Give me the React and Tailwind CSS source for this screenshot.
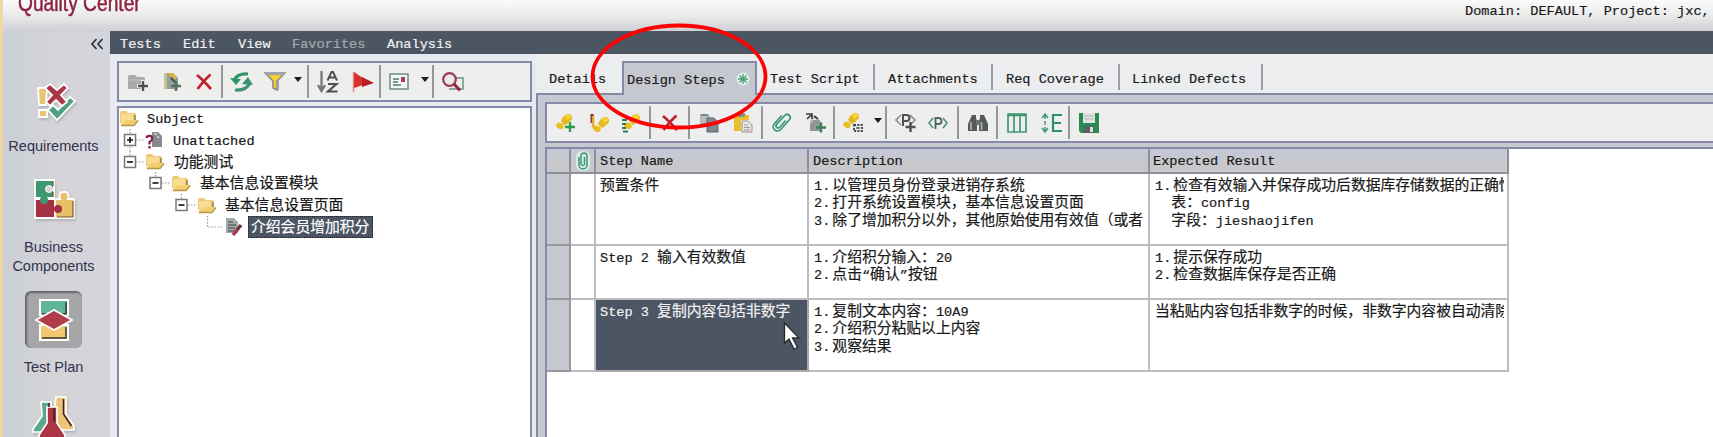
import React from "react";

const LATIN = "font-['Liberation_Mono',monospace] text-[13.6px]";
const CJK = "font-['Noto_Sans_CJK_SC',sans-serif] text-[14.8px]";

// Mixed text: half-width and full-width runs each get their own face and size.
function T({ children, className = "" }) {
  const runs = children.match(/[\u3000-\uffef]+|[^\u3000-\uffef]+/g) || [];
  return (
    <span className={"whitespace-pre [-webkit-text-stroke:0.2px] " + className}>
      {runs.map((r, i) => (
        <span key={i} className={/[\u3000-\uffef]/.test(r) ? CJK : /^\d\.$/.test(r) ? LATIN + " pr-[2px]" : LATIN}>{r}</span>
      ))}
    </span>
  );
}

function Svg({ w, h, children, className = "" }) {
  return (
    <svg width={w} height={h} viewBox={`0 0 ${w} ${h}`} fill="none" className={"block shrink-0 " + className}>
      {children}
    </svg>
  );
}

const Plus = ({ x, y, c = "#4c5150" }) => (
  <path d={`M${x - 5} ${y}h10M${x} ${y - 5}v10`} stroke={c} strokeWidth="2.4" />
);

const Foot = ({ x = 0, y = 0 }) => (
  <g transform={`translate(${x} ${y})`}>
    <path d="M5 7Q7 2 10 .5Q15-1 16 3Q16.500 6 13.500 7.500Q11 11 8.500 11Z" fill="#e6b91c" />
    <path d="M9 1.500Q14-1 15.500 3L11 6.500Z" fill="#f6d23a" />
    <ellipse cx="4" cy="11.800" rx="3.900" ry="3.100" transform="rotate(25 4 11.800)" fill="#e9bf22" />
  </g>
);

const Icon = {
  newFolder: (
    <Svg w={22} h={20}>
      <path d="M1 5Q1 3 3 3h5l2 2h6q2 0 2 2v10H1z" fill="#a9aaac" />
      <path d="M2 8h15" stroke="#c3c4c6" />
      <path d="M10 14h12M16 8v12" stroke="#f0f0f0" strokeWidth="4" />
      <Plus x={16} y={14} />
    </Svg>
  ),
  newTest: (
    <Svg w={20} h={20}>
      <path d="M2 1h9l5 5v11H2z" fill="#929da3" />
      <path d="M2 1h3v16H2z" fill="#c9c48d" />
      <path d="M7 3q5-2 6 4" stroke="#e0b62f" strokeWidth="3" />
      <path d="M9 6l5 5" stroke="#44494d" strokeWidth="2" />
      <Plus x={14} y={14} c="#55735c" />
    </Svg>
  ),
  cross: (
    <Svg w={18} h={18}>
      <path d="M2 2Q8 7 16 16M15.500 1.500Q8 8 2.500 16" stroke="#c01f2c" strokeWidth="2.700" />
    </Svg>
  ),
  refresh: (
    <Svg w={24} h={22}>
      <path d="M4 9Q8 2 18 3" stroke="#2f9465" strokeWidth="3.200" />
      <path d="M0 7l11 1-5 6z" fill="#2f9465" />
      <path d="M20 12Q16 20 5 19" stroke="#3d8f75" strokeWidth="3.200" />
      <path d="M23 14L12 13l6-7z" fill="#3d8f75" />
    </Svg>
  ),
  filter: (
    <Svg w={22} h={20}>
      <path d="M1 1h20l-8 8v9l-4-2V9z" fill="#f3d32c" stroke="#858a91" strokeWidth="1.500" />
      <path d="M2 2h18" stroke="#a2a6ac" strokeWidth="2.500" />
      <path d="M14.500 9v9" stroke="#9fa3aa" />
    </Svg>
  ),
  sort: (
    <Svg w={22} h={24}>
      <path d="M4.500 1v19M1 15l3.500 6L8 15" stroke="#6f7477" strokeWidth="2.200" />
      <path d="M10.500 10.500L14.500 2h1.500l4 8.500M12 7.500h6.500" stroke="#4c5053" strokeWidth="1.900" />
      <path d="M11 14h8.500l-8.500 7.500h9.500" stroke="#4c5053" strokeWidth="2.200" />
    </Svg>
  ),
  flag: (
    <Svg w={22} h={22}>
      <path d="M1.500 1v20" stroke="#d99082" strokeWidth="1.500" />
      <path d="M2 1l9 6v7L2 17z" fill="#dc3030" />
      <path d="M10 6l12 6-12 4z" fill="#b91d27" />
    </Svg>
  ),
  card: (
    <Svg w={20} h={17}>
      <rect x="1" y="1" width="18" height="15" fill="#f6f8f6" stroke="#6e8a80" strokeWidth="1.500" />
      <path d="M4 6h6M4 9h5M4 12h8" stroke="#4d7d68" strokeWidth="1.500" />
      <path d="M12 4h4v5h-4z" fill="#a83b59" />
    </Svg>
  ),
  search: (
    <Svg w={24} h={20}>
      <path d="M14 6h8v11H8" stroke="#6d9385" strokeWidth="1.500" />
      <circle cx="8.500" cy="7.500" r="6.300" fill="#e8e9ec" stroke="#9c3a52" strokeWidth="2.200" />
      <path d="M13 12l6 6.500" stroke="#8e2841" strokeWidth="3" />
    </Svg>
  ),
  stepNew: (
    <Svg w={20} h={20}>
      <Foot y={1} />
      <Plus x={14} y={14} c="#2e9b48" />
    </Svg>
  ),
  stepEdit: (
    <Svg w={20} h={20}>
      <Foot x={4} y={4} />
      <path d="M3 1v9" stroke="#7a2a2a" strokeWidth="3" />
      <path d="M4 3v9l1 3" stroke="#e3a92d" strokeWidth="2.500" />
    </Svg>
  ),
  stepOrder: (
    <Svg w={20} h={20}>
      <Foot x={3} y={1} />
      <path d="M1 7h5M1 11h4M1 15h4M2 18.500h5" stroke="#2f7d57" strokeWidth="1.800" />
    </Svg>
  ),
  copy: (
    <Svg w={20} h={20}>
      <path d="M1 1h8l2 2v11H1z" fill="#b4bcc1" />
      <path d="M2 2h7" stroke="#6b7579" strokeWidth="1.500" />
      <path d="M8 5h7l4 4v10H8z" fill="#80878d" stroke="#5f666c" />
    </Svg>
  ),
  paste: (
    <Svg w={20} h={20}>
      <path d="M1 2h15v5H8v11H1z" fill="#e8c02e" />
      <path d="M5 0h7v4H5z" fill="#8e8a7c" />
      <path d="M9 8h6l4 4v7H9z" fill="#e9e6e2" stroke="#9b948e" />
      <path d="M11 12h4M11 14.500h6M11 17h6" stroke="#a0968d" />
    </Svg>
  ),
  clip: (
    <Svg w={24} h={24}>
      <g transform="rotate(42 12 12)">
        <path d="M7.500 6v11a4.300 4.300 0 0 0 8.600 0V4a3.200 3.200 0 0 0-6.400 0v12a2.100 2.100 0 0 0 4.200 0V7" stroke="#379879" strokeWidth="1.700" />
      </g>
    </Svg>
  ),
  callTest: (
    <Svg w={22} h={22}>
      <path d="M5 8h10l2 11H5z" fill="#8f9697" />
      <path d="M5 11l4-6 5 3" stroke="#d3c9a5" strokeWidth="2" />
      <path d="M1 2h6v5M2 7l5-5M9 4l4 3" stroke="#3b4240" strokeWidth="1.700" />
      <Plus x={16} y={15.500} c="#3d8056" />
    </Svg>
  ),
  stepSelect: (
    <Svg w={20} h={20}>
      <Foot />
      <path d="M11 12h8v6h-8z" stroke="#3d4145" strokeWidth="1.800" strokeDasharray="2 1.300" />
      <path d="M13 15h4" stroke="#555" strokeWidth="1.500" />
    </Svg>
  ),
  paramNew: (
    <Svg w={22} h={20}>
      <path d="M6 2L1 7l5 5M15 2l5 5-5 5" stroke="#8a8f92" strokeWidth="1.600" />
      <path d="M8 13V2h3.500q3 0 3 3t-3 3H8" stroke="#4c5254" strokeWidth="2" />
      <Plus x={15.500} y={14} />
    </Svg>
  ),
  param: (
    <Svg w={20} h={16}>
      <path d="M5 3L1 8l4 5M15 3l4 5-4 5" stroke="#4b9377" strokeWidth="1.600" />
      <path d="M7.500 14V3h3q3 0 3 3t-3 3h-3" stroke="#4f6b61" strokeWidth="1.900" />
    </Svg>
  ),
  find: (
    <Svg w={20} h={18}>
      <path d="M4 1h4v3l1 3v10H0V10z" fill="#55595b" />
      <path d="M16 1h-4v3l-1 3v10h9V10z" fill="#55595b" />
      <path d="M8 6h4v5H8z" fill="#6f7375" />
      <path d="M3 8v8M13.500 8v8" stroke="#a9acad" strokeWidth="1.800" />
    </Svg>
  ),
  columns: (
    <Svg w={20} h={20}>
      <path d="M1 1h18v18H1zM7 2v17M13 2v17" stroke="#3e9a73" strokeWidth="1.700" />
      <path d="M1 2h18" stroke="#3e9a73" strokeWidth="2.500" />
    </Svg>
  ),
  rowHeight: (
    <Svg w={22} h={20}>
      <path d="M4 2v4M4 8v4M4 14v4M1 5l3-4 3 4M1 15l3 4 3-4" stroke="#419a74" strokeWidth="1.500" />
      <path d="M21 2h-9v16h9M12 10h8" stroke="#2f9166" strokeWidth="2.200" />
    </Svg>
  ),
  save: (
    <Svg w={20} h={20}>
      <path d="M0 0h20v20H2l-2-2z" fill="#2a8a55" />
      <path d="M4 0h12v10H4z" fill="#dfe2e2" />
      <path d="M5 3h10M5 6h10" stroke="#b0b6b5" />
      <path d="M5 13h10v7H5z" fill="#5a5f60" />
      <path d="M11 14h3v5h-3z" fill="#dcdedd" />
    </Svg>
  ),
  folder: (
    <Svg w={20} h={17}>
      <path d="M1 13V3q0-2 2-2h4l2 2h6q2 0 2 2v7z" fill="#efc978" />
      <path d="M2 13V4h12v8z" fill="#f8dc92" />
      <path d="M16 5v5" stroke="#96805b" strokeWidth="1.500" />
      <path d="M1 15l6-5h13l-5 5z" fill="#f3cd6e" />
      <path d="M2 15.500h13l4-5" stroke="#b39746" strokeWidth="1.300" />
    </Svg>
  ),
  unattached: (
    <Svg w={18} h={18}>
      <path d="M7 1h6l4 4v11H7z" fill="#858a8d" />
      <path d="M8 2h4v5h4" fill="#c9cccd" />
      <path d="M1.500 7Q2 4.500 5 5q3 .5 2 3.500-.5 1.500-2.500 2.500v2.500M4.500 15v2.500" stroke="#901e50" strokeWidth="2.300" />
    </Svg>
  ),
  test: (
    <Svg w={18} h={19}>
      <path d="M1 1h8l4 4v11H1z" fill="#a3a8ab" />
      <path d="M3 5h5M3 8h8M3 11h7M3 14h6" stroke="#63686b" strokeWidth="1.300" />
      <path d="M16 8l-4 5" stroke="#6d2f38" strokeWidth="3.500" />
      <path d="M12 13l-4 5" stroke="#b43152" strokeWidth="3.500" />
    </Svg>
  ),
};

const Slot = ({ w, icon }) => <div className={"flex h-full shrink-0 items-center justify-center " + w}>{Icon[icon]}</div>;
const Sep = ({ h = "h-[33px]" }) => <div className={"w-[2px] shrink-0 bg-[#94979b] " + h} />;
const Caret = ({ w }) => (
  <div className={"flex shrink-0 items-center justify-center pb-1 " + w}>
    <Svg w={8} h={5}><path d="M0 0h8L4 5z" fill="#1c1c1c" /></Svg>
  </div>
);

function Sidebar() {
  const label = "w-full text-center font-['Liberation_Sans',sans-serif] text-[14.5px] leading-[19px] text-[#30324e]";
  return (
    <aside className="flex w-[110px] shrink-0 flex-col items-center border-l-[3px] border-[#f1d7a5] bg-linear-to-r from-[#cbd0d5] via-[#d5d4d8] to-[#d3d4dc] pr-[6px]">
      <div className="flex h-[50px] w-full shrink-0 items-start justify-end pt-[7px]">
        <Svg w={14} h={12}>
          <path d="M6.500 1L2 6l4.500 5M12.500 1L8 6l4.500 5" stroke="#303236" strokeWidth="1.700" />
        </Svg>
      </div>
      <Svg w={42} h={42} className="mr-[-4px] drop-shadow-[1px_2px_1px_#8886]">
        <path d="M3 7h9l-1 17H4zM4 29h8v7H4z" fill="#eac570" stroke="#fff" strokeWidth="1.800" />
        <path d="M13 29l5-5 5 5 12-13 5 4-18 19z" fill="#4fa07e" stroke="#fff" strokeWidth="1.800" />
        <path d="M15 3l7 6 7-6 4 4-7 7 6 7-5 4-6-6-6 6-4-4 6-7-7-7z" fill="#a93545" stroke="#fff" strokeWidth="1.800" />
      </Svg>
      <div className={label + " mt-[14px]"}>Requirements</div>
      <Svg w={44} h={43} className="mr-[-3px] mt-[22px] drop-shadow-[1px_2px_1px_#8886]">
        <path d="M2 2h19v18H2z" fill="#3e9672" stroke="#fff" strokeWidth="1.800" />
        <path d="M2 21h20v19H2z" fill="#a53142" stroke="#fff" strokeWidth="1.800" />
        <path d="M22 21h5q-2-7 4-7t4 7h6v19H22z" fill="#e9c06a" stroke="#fff" strokeWidth="1.800" />
        <circle cx="16" cy="11" r="3.500" fill="#d5d5d8" stroke="#f3faf6" />
        <circle cx="11" cy="22" r="4" fill="#3e9672" />
        <circle cx="25" cy="31" r="4" fill="#a53142" />
        <path d="M20 3v5M20 14v5M40 23v16H24" stroke="#7b5b30" strokeWidth="1.200" />
      </Svg>
      <div className={label + " mt-[17px]"}>Business<br />Components</div>
      <div className="mt-[15px] flex h-[57px] w-[57px] shrink-0 items-center justify-center rounded-[6px] border-t border-l border-[#66676b] bg-[#a6a5a8] shadow-[inset_1px_1px_2px_#666]">
        <Svg w={38} h={44}>
          <path d="M5 2h28v15H5z" fill="#62b596" stroke="#fff" strokeWidth="2" />
          <path d="M5 27h28v15H5z" fill="#f1c870" stroke="#fff" strokeWidth="2" />
          <path d="M31 4v12H7M31 29v11H7" stroke="#2c3b33" strokeWidth="1.500" />
          <path d="M1 22l18-10 18 10-18 10z" fill="#b13c4b" stroke="#fff" strokeWidth="1.800" />
        </Svg>
      </div>
      <div className={label + " mt-[10px]"}>Test Plan</div>
      <Svg w={44} h={50} className="mt-[19px] drop-shadow-[1px_2px_1px_#8886]">
        <path d="M9 6h10v14l3 16H1v-3l9-13z" fill="#5ba88c" stroke="#fff" strokeWidth="1.700" />
        <path d="M24 1h10v17l8 12v4H22V18z" fill="#ecc477" stroke="#fff" strokeWidth="1.700" />
        <path d="M15 11h10v16l8 12v9H7v-9l8-12z" fill="#ad3445" stroke="#fff" strokeWidth="1.700" />
        <path d="M22 12v14M31.500 3v15l8 12M17 7v4" stroke="#3b2024" strokeWidth="1.500" />
      </Svg>
    </aside>
  );
}

// Connector column of a tree row; box is the x of the expander centre.
function Branch({ w, box, open, from, leaf }) {
  return (
    <Svg w={w} h={22}>
      <path d={from} stroke="#9a9a9a" strokeWidth="1.200" strokeDasharray="1.500 1.500" />
      {!leaf && (
        <>
          <rect x={box - 5.5} y="5.500" width="11" height="11" fill="#fff" stroke="#777" strokeWidth="1.500" />
          <path d={`M${box - 3} 11h6${open ? "" : `M${box} 8v6`}`} stroke="#111" strokeWidth="1.600" />
        </>
      )}
    </Svg>
  );
}

function Tree() {
  const row = "flex h-[21.8px] shrink-0 items-center";
  return (
    <div className="flex min-h-0 flex-1 flex-col border-2 border-b-0 border-[#868aa8] bg-white text-[#161616]">
      <div className="flex h-[20.8px] shrink-0 items-center">{Icon.folder}<T className="pb-px pl-[8px]">Subject</T></div>
      <div className={row}>
        <Branch w={26} box={11} from="M11 0v22M17 11h9" />
        <div className="w-[20px]">{Icon.unattached}</div><T className="pb-px pl-[8px]">Unattached</T>
      </div>
      <div className={row}>
        <Branch w={26} box={11} open from="M11 0v6M17 11h9" />
        {Icon.folder}<T className="pb-[2px] pl-[9px]">功能测试</T>
      </div>
      <div className={row}>
        <Branch w={52} box={36.5} open from="M36.500 0v6M43 11h9" />
        {Icon.folder}<T className="pb-[2px] pl-[9px]">基本信息设置模块</T>
      </div>
      <div className={row}>
        <Branch w={78} box={62.5} open from="M62.500 0v6M69 11h9" />
        {Icon.folder}<T className="pb-[2px] pl-[8px]">基本信息设置页面</T>
      </div>
      <div className={row}>
        <Branch w={106} leaf from="M88.500 0v11h15" />
        {Icon.test}
        <div className="ml-[5px] flex h-[22px] w-[125px] items-center border border-dotted border-[#d8d8d8] bg-[#4c5564] pl-[2px] text-white outline outline-dotted outline-[#222] -outline-offset-1">
          <T className="pb-px">介绍会员增加积分</T>
        </div>
      </div>
    </div>
  );
}

function LeftPane() {
  return (
    <section className="flex w-[426px] shrink-0 flex-col bg-[#e8eaf1] pt-[7px] pr-[4px] pl-[7px]">
      <div className="mb-[4px] flex h-[41px] shrink-0 items-center border-2 border-[#868aa8] bg-[#eeeeed]">
        <Slot w="w-[38px]" icon="newFolder" />
        <Slot w="w-[30px]" icon="newTest" />
        <Slot w="w-[34px]" icon="cross" />
        <Sep />
        <Slot w="w-[38px]" icon="refresh" />
        <Slot w="w-[28px]" icon="filter" />
        <Caret w="w-[18px]" />
        <Sep />
        <Slot w="w-[38px]" icon="sort" />
        <Slot w="w-[32px]" icon="flag" />
        <Sep />
        <Slot w="w-[36px]" icon="card" />
        <Caret w="w-[15px]" />
        <Sep />
        <Slot w="w-[38px]" icon="search" />
      </div>
      <Tree />
    </section>
  );
}

function Tab({ w, children }) {
  return (
    <div className={"flex h-[32px] shrink-0 items-center border-b-2 border-[#868aa8] " + w}>
      <T className="flex-1">{children}</T>
    </div>
  );
}
const TabSep = () => (
  <div className="h-[32px] w-[2px] shrink-0 border-b-2 border-[#868aa8] pt-[1px]"><div className="h-[26px] bg-[#9b9dae]" /></div>
);

function Tabs() {
  return (
    <div className="flex h-[41px] shrink-0 items-end text-[#1c1c1c]">
      <Tab w="w-[86px] pl-[13px]">Details</Tab>
      <div className="flex h-[34px] w-[135px] shrink-0 items-center border-2 border-b-0 border-[#868aa8] bg-[#c6c8d0] pb-px pl-[3px]">
        <T>Design Steps</T>
        <Svg w={14} h={14} className="ml-[11px]">
          <circle cx="7" cy="7" r="6.500" fill="#e3efe9" />
          <path d="M7 2v10M2 7h10M3.500 3.500l7 7M10.500 3.500l-7 7" stroke="#4d9f7c" strokeWidth="1.300" />
        </Svg>
      </div>
      <Tab w="w-[116px] pl-[13px]">Test Script</Tab>
      <TabSep />
      <Tab w="w-[116px] pl-[13px]">Attachments</Tab>
      <TabSep />
      <Tab w="w-[125px] pl-[13px]">Req Coverage</Tab>
      <TabSep />
      <Tab w="w-[141px] pl-[12px]">Linked Defects</Tab>
      <TabSep />
      <div className="h-[2px] flex-1 bg-[#868aa8]" />
    </div>
  );
}

const rows = [
  { h: "h-[72px]", name: "预置条件", desc: ["1.以管理员身份登录进销存系统", "2.打开系统设置模块，基本信息设置页面", "3.除了增加积分以外，其他原始使用有效值（或者"], exp: ["1.检查有效输入并保存成功后数据库存储数据的正确性", "  表：config", "  字段：jieshaojifen"] },
  { h: "h-[54px]", name: "Step 2 输入有效数值", desc: ["1.介绍积分输入：20", "2.点击“确认”按钮"], exp: ["1.提示保存成功", "2.检查数据库保存是否正确"] },
  { h: "h-[72px]", name: "Step 3 复制内容包括非数字", desc: ["1.复制文本内容：10A9", "2.介绍积分粘贴以上内容", "3.观察结果"], exp: ["当粘贴内容包括非数字的时候，非数字内容被自动清除"], selected: true },
];

const Lines = ({ items, w }) => (
  <div className={"flex shrink-0 flex-col overflow-hidden border-r-2 border-b-2 border-[#bdbdbf] pt-[2px] pl-[5px] " + w}>
    {items.map((t, i) => (
      <div key={i} className="flex h-[17.7px] shrink-0 items-center overflow-hidden pb-px leading-none"><T>{t}</T></div>
    ))}
  </div>
);

function Grid() {
  const head = "flex shrink-0 items-center border-r-2 border-b-2 border-[#8d8f9b] bg-linear-to-b from-[#c3c7d8] via-[#c8c8cd] to-[#c8c8cb] ";
  return (
    <div className="min-h-0 flex-1 border-t-2 border-l-2 border-[#868aa8] bg-white text-[#1a1a1a]">
      <div className="flex h-[25px]">
        <div className={head + "w-[24px]"} />
        <div className={head + "w-[25px] justify-center"}>
          <Svg w={14} h={20}>
            <rect width="14" height="20" rx="6" fill="#dceae4" />
            <path d="M3 6v8a4 4 0 0 0 8 0V5a3 3 0 0 0-6 0v8.500a2 2 0 0 0 3.500 0V6" stroke="#3c9b78" strokeWidth="1.500" />
          </Svg>
        </div>
        <div className={head + "w-[213px] pb-[2px] pl-[4px]"}><T>Step Name</T></div>
        <div className={head + "w-[341px] pb-[2px] pl-[4px]"}><T>Description</T></div>
        <div className={head + "w-[359px] pb-[2px] pl-[3px]"}><T>Expected Result</T></div>
      </div>
      {rows.map((r) => (
        <div key={r.name} className={"flex " + r.h}>
          <div className="w-[24px] shrink-0 border-r-2 border-b-2 border-[#97989f] bg-[#c6c8d0]" />
          <div className="w-[25px] shrink-0 border-r-2 border-b-2 border-[#bdbdbf]" />
          <div className={"w-[213px] shrink-0 border-r-2 border-b-2 pt-[2px] pl-[4px] " + (r.selected ? "border-[#aaa8a8] bg-[#4c5564] text-[#f1f1f1]" : "border-[#bdbdbf]")}>
            <div className="flex h-[17.7px] items-center pb-px leading-none"><T>{r.name}</T></div>
          </div>
          <Lines items={r.desc} w="w-[341px]" />
          <Lines items={r.exp} w="w-[359px] pr-[3px]" />
        </div>
      ))}
    </div>
  );
}

function RightPane() {
  return (
    <section className="flex min-w-0 flex-1 flex-col bg-[#ebedef]">
      <Tabs />
      <div className="flex min-h-0 flex-1 flex-col border-l-2 border-[#868aa8] bg-[#c6c8d0] pt-[7px] pl-[7px]">
        <div className="mb-[4px] flex h-[41px] shrink-0 items-center border-2 border-r-0 border-[#868aa8] bg-[#eeeeef]">
          <Slot w="w-[38px]" icon="stepNew" />
          <Slot w="w-[27px]" icon="stepEdit" />
          <Slot w="w-[37px]" icon="stepOrder" />
          <Sep />
          <Slot w="w-[37px]" icon="cross" />
          <Sep />
          <Slot w="w-[38px]" icon="copy" />
          <Slot w="w-[29px]" icon="paste" />
          <div className="w-[4px] shrink-0" />
          <Sep />
          <Slot w="w-[35px]" icon="clip" />
          <Slot w="w-[35px]" icon="callTest" />
          <Sep />
          <Slot w="w-[36px]" icon="stepSelect" />
          <Caret w="w-[14px]" />
          <Sep />
          <Slot w="w-[37px]" icon="paramNew" />
          <Slot w="w-[28px]" icon="param" />
          <div className="w-[5px] shrink-0" />
          <Sep />
          <Slot w="w-[37px]" icon="find" />
          <Sep />
          <Slot w="w-[37px]" icon="columns" />
          <Slot w="w-[33px]" icon="rowHeight" />
          <Sep />
          <Slot w="w-[38px]" icon="save" />
        </div>
        <Grid />
      </div>
    </section>
  );
}

export default function App() {
  return (
    <div className="relative flex h-[437px] w-[1713px] flex-col overflow-hidden bg-white">
      <header className="flex h-[31px] shrink-0 justify-between border-l-[3px] border-[#f1d7a5] bg-linear-to-b from-[#fbfbfb] via-[#ebeaeb] to-[#cfd0d4] pl-[15px]">
        <div className="-mt-[10px] h-[26px] origin-left scale-x-[0.835] font-['Liberation_Sans',sans-serif] text-[23px] leading-[26px] text-[#8c2340] [-webkit-text-stroke:0.5px]">Quality Center</div>
        <div className="w-[248px] leading-[18px] text-[#1a1a1a]"><T>Domain: DEFAULT, Project: jxc,</T></div>
      </header>
      <div className="flex min-h-0 flex-1">
        <Sidebar />
        <div className="flex min-w-0 flex-1 flex-col">
          <nav className="flex h-[23px] shrink-0 items-center bg-[#4c5663] pl-[10px] text-[#f0f0f0]">
            <T className="w-[63px]">Tests</T>
            <T className="w-[55px]">Edit</T>
            <T className="w-[54px]">View</T>
            <T className="w-[95px] text-[#a3a8ae]">Favorites</T>
            <T>Analysis</T>
          </nav>
          <div className="flex min-h-0 flex-1">
            <LeftPane />
            <RightPane />
          </div>
        </div>
      </div>
      <svg className="pointer-events-none absolute top-[20px] left-[588px]" width="182" height="113" viewBox="0 0 182 113" fill="none">
        <ellipse cx="91" cy="56.500" rx="86.500" ry="51" stroke="#fb0303" strokeWidth="3.800" />
      </svg>
      <svg className="pointer-events-none absolute top-[321px] left-[783px]" width="18" height="30" viewBox="0 0 18 30">
        <path d="M1.500 2v20l4.500-4 5 10 3.500-1.500-5-9.500h6.500z" fill="#fff" stroke="#26282c" strokeWidth="1.300" />
      </svg>
    </div>
  );
}
